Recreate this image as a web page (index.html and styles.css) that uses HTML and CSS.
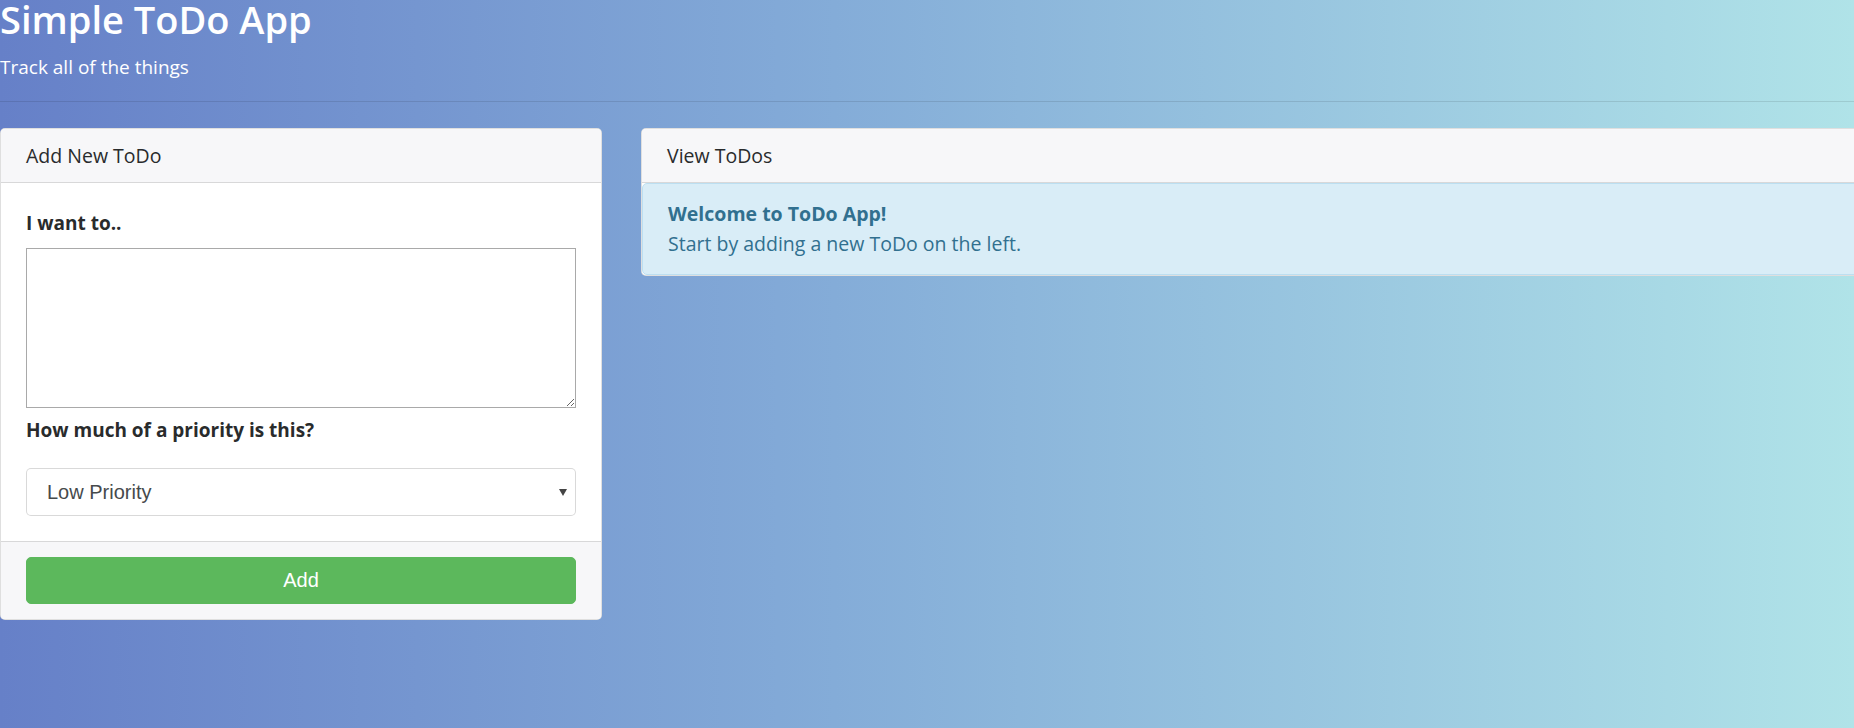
FILE: index.html
```html
<!DOCTYPE html>
<html lang="en">
<head>
<meta charset="utf-8">
<title>Simple ToDo App</title>
<link rel="stylesheet" href="styles.css">
</head>
<body>
<header class="hero">
  <h1 class="hero-title">Simple ToDo App</h1>
  <p class="hero-lead">Track all of the things</p>
  <hr class="hero-rule">
</header>
<main class="board">
  <section class="card">
    <div class="card-header">Add New ToDo</div>
    <div class="card-body">
      <label class="field-label" for="todo-text">I want to..</label>
      <textarea id="todo-text" class="todo-input"></textarea>
      <label class="field-label field-label-gap" for="todo-priority">How much of a priority is this?</label>
      <div class="select-wrap">
        <select id="todo-priority" class="priority-select">
          <option>Low Priority</option>
          <option>Medium Priority</option>
          <option>High Priority</option>
        </select>
      </div>
    </div>
    <div class="card-footer">
      <button class="btn-add" type="button">Add</button>
    </div>
  </section>
  <section class="card">
    <div class="card-header">View ToDos</div>
    <div class="alert-info">
      <strong class="alert-title">Welcome to ToDo App!</strong>
      <div class="alert-text">Start by adding a new ToDo on the left.</div>
    </div>
  </section>
</main>
</body>
</html>
```
FILE: styles.css
```css
html {
  height: 100%;
  overflow: hidden;
}

body {
  margin: 0;
  height: 100%;
  overflow: hidden;
  background: linear-gradient(to right, #6680c8 0%, #84acd8 45%, #b0e3e8 100%);
  font-family: "Open Sans", "Noto Sans", sans-serif;
  font-size: 19.5px;
  color: #292b2c;
}

.hero-title {
  margin: 0;
  font-size: 38px;
  font-weight: 600;
  line-height: 38px;
  color: #fff;
}

.hero-lead {
  margin: 14px 0 0;
  font-size: 19px;
  line-height: 30px;
  color: #fff;
}

.hero-rule {
  height: 0;
  margin: 19px 0 26px;
  border: 0;
  border-top: 1px solid rgba(0, 0, 0, 0.1);
}

.board {
  display: grid;
  grid-template-columns: 602px 1300px;
  column-gap: 39px;
  align-items: start;
}

.card {
  background: #fff;
  border: 1px solid rgba(0, 0, 0, 0.125);
  border-radius: 5px;
  overflow: hidden;
}

.card-header {
  background: #f7f7f9;
  padding: 12px 25px;
  line-height: 29px;
  border-bottom: 1px solid rgba(0, 0, 0, 0.125);
}

.card-body {
  padding: 25px;
}

.field-label {
  display: block;
  font-weight: 700;
  font-size: 19px;
  line-height: 30px;
  margin-bottom: 10px;
}

.field-label-gap {
  margin-bottom: 23px;
}

.todo-input {
  display: block;
  box-sizing: border-box;
  width: 100%;
  height: 160px;
  margin: 0 0 7px;
  padding: 2px;
  border: 1px solid #a9a9a9;
  border-radius: 0;
  font-family: "Liberation Mono", monospace;
  font-size: 13px;
  background: #fff;
}

.select-wrap {
  position: relative;
}

.select-wrap::after {
  content: "";
  position: absolute;
  right: 9px;
  top: 21px;
  border-left: 4px solid transparent;
  border-right: 4px solid transparent;
  border-top: 7px solid #444;
  pointer-events: none;
}

.priority-select {
  display: block;
  box-sizing: border-box;
  width: 100%;
  height: 48px;
  padding: 0 30px 0 20px;
  border: 1px solid rgba(0, 0, 0, 0.15);
  border-radius: 5px;
  background: #fff;
  color: #464a4c;
  font-family: "Liberation Sans", Arial, sans-serif;
  font-size: 20px;
  -webkit-appearance: none;
  appearance: none;
}

.card-footer {
  background: #f7f7f9;
  padding: 15px 25px;
  border-top: 1px solid rgba(0, 0, 0, 0.125);
}

.btn-add {
  display: block;
  width: 100%;
  height: 47px;
  border: 1px solid #5cb85c;
  border-radius: 5px;
  background: #5cb85c;
  color: #fff;
  font-family: "Liberation Sans", Arial, sans-serif;
  font-size: 20px;
}

.alert-info {
  background: #d9edf7;
  border: 1px solid #bcdff1;
  border-radius: 5px;
  color: #31708f;
  padding: 15px 25px;
  line-height: 30px;
}

.alert-title {
  display: block;
  font-weight: 700;
}
```
